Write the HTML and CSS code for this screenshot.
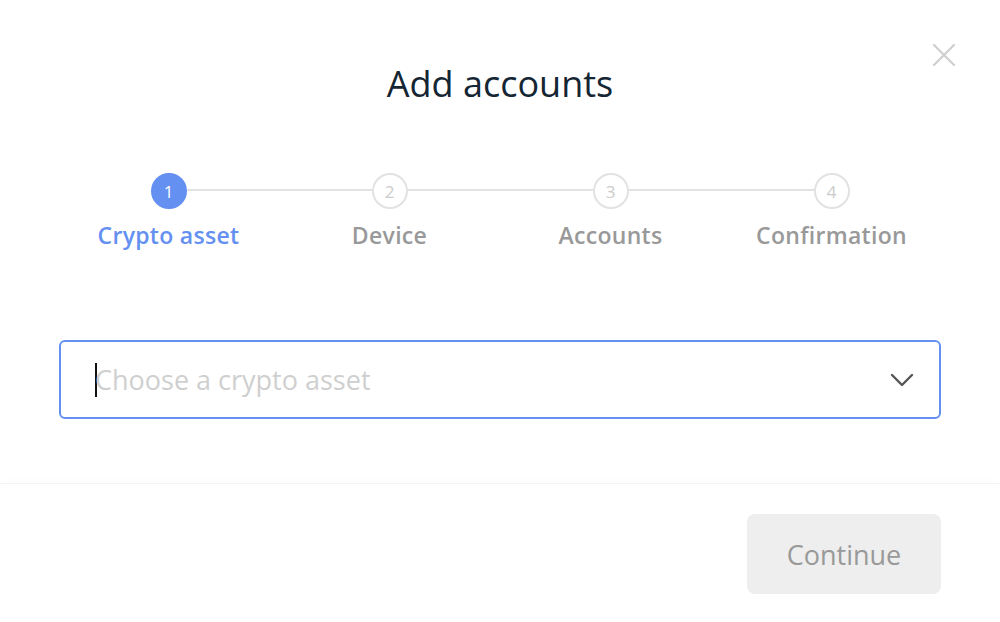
FILE: index.html
```html
<!DOCTYPE html>
<html lang="en">
<head>
<meta charset="utf-8">
<title>Add accounts</title>
<link rel="stylesheet" href="styles.css">
</head>
<body>
<div class="modal">
  <button class="close" aria-label="Close">
    <svg width="24" height="24" viewBox="0 0 24 24"><path d="M2 2 L22 22 M22 2 L2 22" stroke="#cfcfcf" stroke-width="2.2" stroke-linecap="round" fill="none"/></svg>
  </button>
  <div class="content">
    <h1 class="title">Add accounts</h1>
    <ol class="stepper">
      <li class="step active"><span class="dot">1</span><span class="label">Crypto asset</span></li>
      <li class="step"><span class="dot">2</span><span class="label">Device</span></li>
      <li class="step"><span class="dot">3</span><span class="label">Accounts</span></li>
      <li class="step"><span class="dot">4</span><span class="label">Confirmation</span></li>
    </ol>
    <div class="select">
      <span class="caret"></span>
      <span class="placeholder">Choose a crypto asset</span>
      <svg class="chevron" width="24" height="14" viewBox="0 0 24 14"><path d="M2 2 L12 12 L22 2" stroke="#555" stroke-width="2.4" stroke-linecap="round" stroke-linejoin="round" fill="none"/></svg>
    </div>
  </div>
  <div class="footer">
    <button class="continue" disabled>Continue</button>
  </div>
</div>
</body>
</html>
```
FILE: styles.css
```css
* { box-sizing: border-box; }
html, body { margin: 0; padding: 0; background: #fff; }
body { font-family: "Open Sans", "Liberation Sans", sans-serif; }

.modal {
  position: relative;
  width: 1000px;
  height: 622px;
  display: flex;
  flex-direction: column;
  background: #fff;
}

.close {
  position: absolute;
  top: 43px;
  right: 44px;
  padding: 0;
  border: 0;
  background: transparent;
  width: 24px;
  height: 24px;
}

.content {
  flex: 1;
  padding: 59px 59px 0;
  display: flex;
  flex-direction: column;
}

.title {
  margin: 0;
  font-size: 36px;
  font-weight: 400;
  line-height: 49px;
  text-align: center;
  color: #142533;
}

.stepper {
  list-style: none;
  margin: 65px -1px 0;
  padding: 0;
  display: grid;
  grid-template-columns: repeat(4, 1fr);
}

.step {
  position: relative;
  display: flex;
  flex-direction: column;
  align-items: center;
}

.step + .step::before {
  content: "";
  position: absolute;
  top: 16px;
  left: calc(-50% + 18px);
  right: calc(50% + 18px);
  height: 2px;
  background: #e2e2e2;
}

.dot {
  width: 36px;
  height: 36px;
  border-radius: 50%;
  border: 2px solid #e2e2e2;
  display: flex;
  align-items: center;
  justify-content: center;
  font-size: 17px;
  color: #cccccc;
  background: #fff;
}

.active .dot {
  background: #6490f1;
  border-color: #6490f1;
  color: #fff;
}

.label {
  margin-top: 11px;
  font-size: 23px;
  font-weight: 600;
  letter-spacing: 0.3px;
  line-height: 30px;
  color: #999999;
}

.active .label { color: #6490f1; }

.select {
  margin-top: 90px;
  height: 79px;
  border: 2px solid #6490f1;
  border-radius: 6px;
  display: flex;
  align-items: center;
  padding: 0 25px 0 34px;
}

.caret {
  width: 2px;
  height: 34px;
  background: #111;
  flex: none;
}

.placeholder {
  flex: 1;
  font-size: 27px;
  color: #cfcfcf;
  margin-left: -2px;
}

.chevron { flex: none; }

.footer {
  height: 139px;
  border-top: 1px solid #f3f3f3;
  box-shadow: 0 -4px 8px rgba(0, 0, 0, 0.012);
  display: flex;
  justify-content: flex-end;
  align-items: flex-start;
  padding: 30px 59px 0;
}

.continue {
  width: 194px;
  height: 80px;
  border: 0;
  border-radius: 8px;
  background: #eeeeee;
  color: #999999;
  font-family: "Open Sans", "Liberation Sans", sans-serif;
  font-size: 27px;
}
```
